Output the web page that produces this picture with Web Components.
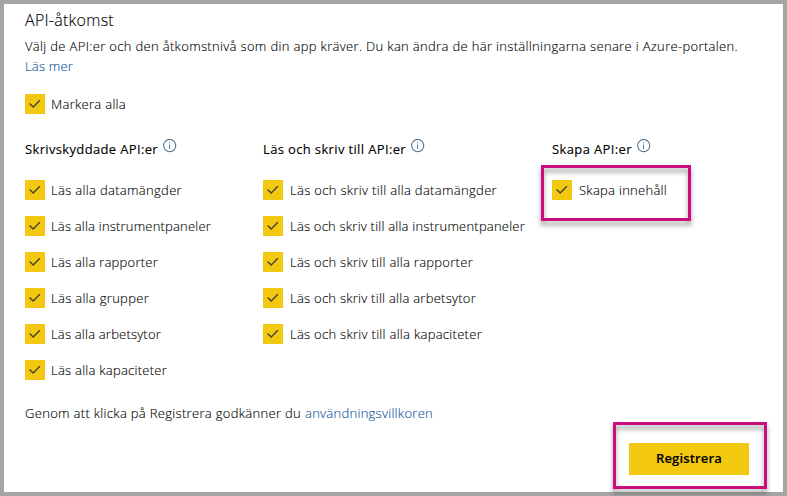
<!DOCTYPE html>
<html lang="sv">
<head>
<meta charset="utf-8">
<title>API-åtkomst</title>
<style>
html,body{margin:0;height:100%;overflow:hidden;background:#fff}
body{font-family:"Open Sans","Noto Sans",sans-serif;font-size:13px;color:#000}
</style>
</head>
<body>
<api-access-page></api-access-page>
<script>
/* A single line of text spaced to fill a given width. */
class FitText extends HTMLElement {
  constructor() {
    super();
    this.attachShadow({mode:'open'}).innerHTML = `<style>
      :host{display:inline-block;white-space:nowrap;flex:none}
      span{display:inline-block}
    </style><span><slot></slot></span>`;
  }
  connectedCallback() {
    const w = +this.getAttribute('w');
    const span = this.shadowRoot.querySelector('span');
    this.style.width = w + 'px';
    const n = this.textContent.length;
    span.style.letterSpacing = (w - span.getBoundingClientRect().width) / n + 'px';
  }
}
class CheckOption extends HTMLElement {
  constructor() {
    super();
    this.attachShadow({mode:'open'}).innerHTML = `<style>
      :host{display:flex;align-items:center;height:20px;gap:var(--gap,6px);line-height:20px}
      .box{width:20px;height:20px;background:#f2c811;flex:none}
      svg{display:block}
    </style><div class="box"><svg width="20" height="20" viewBox="0 0 20 20"><path d="M4.6 9.6 8.2 13 14.9 6.3" fill="none" stroke="#45402c" stroke-width="1.35"/></svg></div><slot></slot>`;
  }
}
class InfoIcon extends HTMLElement {
  constructor() {
    super();
    this.attachShadow({mode:'open'}).innerHTML = `<style>
      :host{display:block;flex:none;width:14px;height:14px;margin-bottom:6px}
      svg{display:block}
    </style><svg width="14" height="14" viewBox="0 0 14 14"><circle cx="6.7" cy="6.6" r="6.1" fill="none" stroke="#4f6f8a" stroke-width="1.05"/><path d="M6.5 5.5V10M6.5 3.2v1.2" stroke="#3b83bd" stroke-width="1"/></svg>`;
  }
}
class ApiGroup extends HTMLElement {
  constructor() {
    super();
    this.attachShadow({mode:'open'}).innerHTML = `<style>
      :host{display:block}
      header{display:flex;align-items:center;gap:5px;height:20px;line-height:20px;margin-bottom:21px}
      .list{display:flex;flex-direction:column;gap:16px}
    </style><header><slot name="title"></slot><info-icon></info-icon></header><div class="list"><slot></slot></div>`;
  }
}
class RegisterButton extends HTMLElement {
  constructor() {
    super();
    this.attachShadow({mode:'open'}).innerHTML = `<style>
      :host{display:block}
      button{display:flex;align-items:center;justify-content:center;width:120px;height:32px;border:0;padding:0 0 2px;background:#f2c811;color:#000;font:600 13px "Open Sans","Noto Sans",sans-serif}
    </style><button><slot></slot></button>`;
  }
}
/* Outlined callout laid over the page. */
class HighlightFrame extends HTMLElement {
  constructor() {
    super();
    this.attachShadow({mode:'open'}).innerHTML = `<style>
      :host{position:absolute;box-sizing:border-box;border:3px solid #c90f7d;pointer-events:none;
        filter:drop-shadow(0 4px 2.5px rgba(0,0,0,.42))}
    </style>`;
  }
}
class ApiAccessPage extends HTMLElement {
  constructor() {
    super();
    const items = (list) => list.map(([t,w]) => `<check-option><fit-text w="${w}">${t}</fit-text></check-option>`).join('');
    this.attachShadow({mode:'open'}).innerHTML = `<style>
      :host{display:block;position:relative;box-sizing:border-box;width:787px;height:496px;border:4px solid #a5a5a5;padding:5px 30px 0 21px;font-weight:300;-webkit-text-stroke:.12px}
      h1{margin:0;font-size:16px;font-weight:300;line-height:22px;height:27px}
      p{margin:0;line-height:20px}
      a{color:#0f559c;text-decoration:none}
      .all{margin:18px 0 25px}
      .groups{display:grid;grid-template-columns:238px 289px 1fr;height:241px}
      .groups > :nth-child(2){--gap:7px}
      .groups > :nth-child(3){--gap:7px}
      [slot=title]{font-weight:400}
      .terms{display:flex;gap:4px;margin-top:23px}
      .actions{display:flex;justify-content:flex-end;margin:20px 4px 0 0}
      .one{left:537px;top:161px;width:150px;height:56px}
      .two{left:609px;top:418px;width:154px;height:67px}
    </style>
    <h1><fit-text w="89">API-åtkomst</fit-text></h1>
    <p><fit-text w="713">Välj de API:er och den åtkomstnivå som din app kräver. Du kan ändra de här inställningarna senare i Azure-portalen.</fit-text></p>
    <p><a><fit-text w="48">Läs mer</fit-text></a></p>
    <check-option class="all"><fit-text w="75">Markera alla</fit-text></check-option>
    <div class="groups">
      <api-group><fit-text slot="title" w="133">Skrivskyddade API:er</fit-text>${items([['Läs alla datamängder',131],['Läs alla instrumentpaneler',160],['Läs alla rapporter',107],['Läs alla grupper',98],['Läs alla arbetsytor',110],['Läs alla kapaciteter',116]])}</api-group>
      <api-group><fit-text slot="title" w="143">Läs och skriv till API:er</fit-text>${items([['Läs och skriv till alla datamängder',207],['Läs och skriv till alla instrumentpaneler',235],['Läs och skriv till alla rapporter',183],['Läs och skriv till alla arbetsytor',186],['Läs och skriv till alla kapaciteter',192]])}</api-group>
      <api-group><fit-text slot="title" w="80">Skapa API:er</fit-text>${items([['Skapa innehåll',88]])}</api-group>
    </div>
    <p class="terms"><fit-text w="276">Genom att klicka på Registrera godkänner du</fit-text><a><fit-text w="128">användningsvillkoren</fit-text></a></p>
    <div class="actions"><register-button><fit-text w="66">Registrera</fit-text></register-button></div>
    <highlight-frame class="one"></highlight-frame>
    <highlight-frame class="two"></highlight-frame>`;
  }
}
customElements.define('info-icon', InfoIcon);
customElements.define('check-option', CheckOption);
customElements.define('api-group', ApiGroup);
customElements.define('register-button', RegisterButton);
customElements.define('highlight-frame', HighlightFrame);
customElements.define('api-access-page', ApiAccessPage);
customElements.define('fit-text', FitText);
</script>
</body>
</html>
